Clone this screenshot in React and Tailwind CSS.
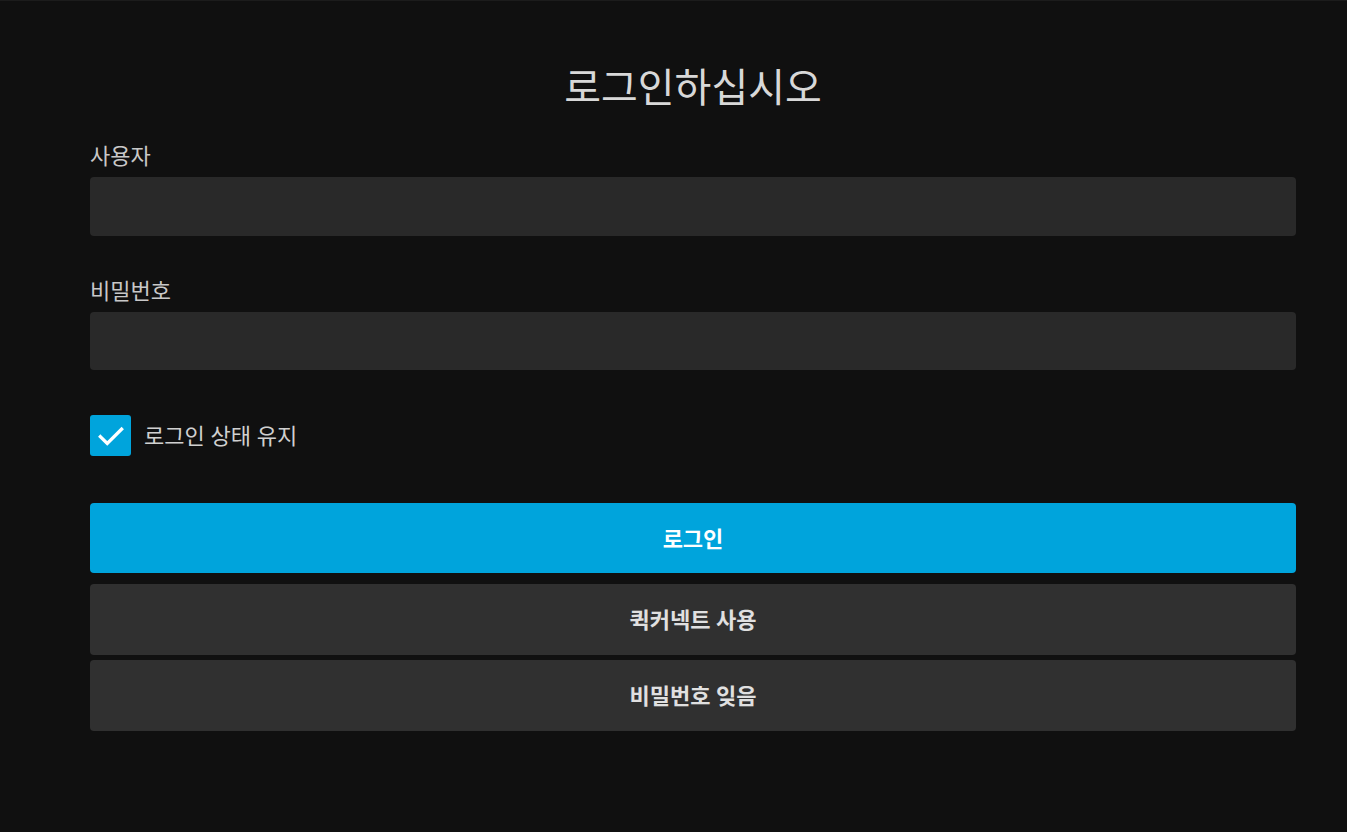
import { useState } from 'react'

const font = { fontFamily: '"Noto Sans", "Noto Sans CJK KR", sans-serif' }

function Field({ label, type = 'text', className = '', inputClass = 'h-[59px]' }) {
  return (
    <div className={className}>
      <label className="block text-[22px] leading-[30px] text-[#c8c8c8]">{label}</label>
      <input
        type={type}
        className={`mt-[7px] block w-full ${inputClass} rounded-[4px] bg-[#292929] px-3 text-[20px] text-white outline-none`}
      />
    </div>
  )
}

export default function App() {
  const [remember, setRemember] = useState(true)

  return (
    <div className="min-h-screen bg-[#101010] border-t border-[#1c1c1c]" style={font}>
      <div className="ml-[90px] w-[1206px] pt-[64px]">
        <h1 className="text-center text-[40px] leading-[44px] text-[#d8d8d8]">로그인하십시오</h1>

        <Field label="사용자" className="mt-[31px]" />
        <Field label="비밀번호" type="password" className="mt-[39px]" inputClass="h-[58px]" />

        {/* Remember me */}
        <label className="mt-[45px] flex items-center gap-[13px] cursor-pointer">
          <button
            type="button"
            onClick={() => setRemember(!remember)}
            className={`flex h-[41px] w-[41px] items-center justify-center rounded-[3px] ${
              remember ? 'bg-[#00a4dc]' : 'bg-[#292929]'
            }`}
          >
            {remember && (
              <svg width="30" height="30" viewBox="0 0 24 24" fill="none">
                <path d="M3.5 12.5l5.5 5.5L20.5 6.5" stroke="white" strokeWidth="2.6" strokeLinecap="square" />
              </svg>
            )}
          </button>
          <span className="text-[22px] text-[#d0d0d0]">로그인 상태 유지</span>
        </label>

        {/* Buttons */}
        <button className="mt-[47px] block w-full h-[70px] rounded-[4px] bg-[#00a4dc] text-[22px] font-bold text-white">
          로그인
        </button>
        <button className="mt-[11px] block w-full h-[71px] rounded-[4px] bg-[#303030] text-[22px] font-bold text-[#e0e0e0]">
          퀵커넥트 사용
        </button>
        <button className="mt-[5px] block w-full h-[71px] rounded-[4px] bg-[#303030] text-[22px] font-bold text-[#e0e0e0]">
          비밀번호 잊음
        </button>
      </div>
    </div>
  )
}
